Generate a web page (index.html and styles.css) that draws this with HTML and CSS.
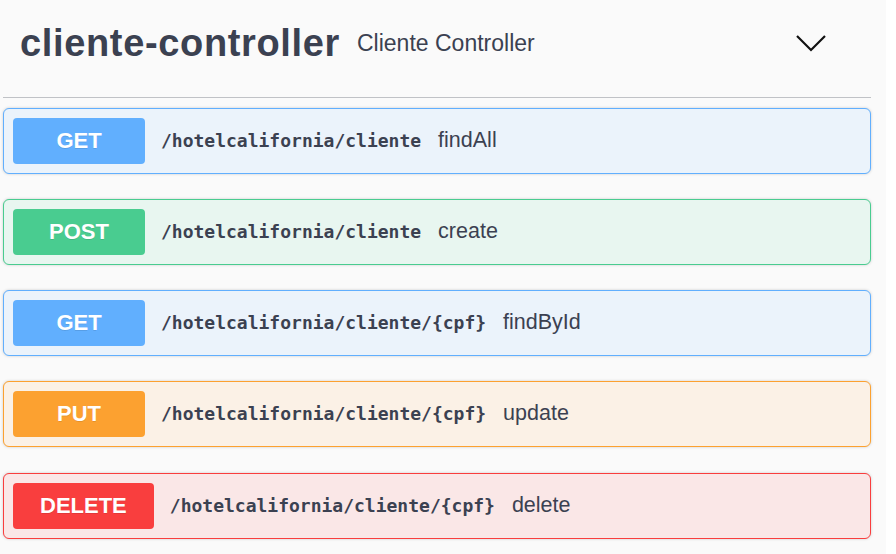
FILE: index.html
```html
<!DOCTYPE html>
<html lang="pt">
<head>
<meta charset="utf-8">
<title>cliente-controller</title>
<link rel="stylesheet" href="styles.css">
</head>
<body>
<div class="page">
  <div class="tag-section">
    <h4 class="opblock-tag">
      <a class="tag-name">cliente-controller</a>
      <small class="tag-desc">Cliente Controller</small>
      <button class="expand" aria-label="Collapse">
        <svg width="32" height="18" viewBox="0 0 32 18"><polyline points="2,2 16,16 30,2" fill="none" stroke="#111" stroke-width="2.2"/></svg>
      </button>
    </h4>
    <div class="ops">
      <div class="opblock get">
        <span class="method">GET</span>
        <span class="path">/hotelcalifornia/cliente</span>
        <span class="desc">findAll</span>
      </div>
      <div class="opblock post">
        <span class="method">POST</span>
        <span class="path">/hotelcalifornia/cliente</span>
        <span class="desc">create</span>
      </div>
      <div class="opblock get">
        <span class="method">GET</span>
        <span class="path">/hotelcalifornia/cliente/{cpf}</span>
        <span class="desc">findById</span>
      </div>
      <div class="opblock put">
        <span class="method">PUT</span>
        <span class="path">/hotelcalifornia/cliente/{cpf}</span>
        <span class="desc">update</span>
      </div>
      <div class="opblock delete">
        <span class="method">DELETE</span>
        <span class="path">/hotelcalifornia/cliente/{cpf}</span>
        <span class="desc">delete</span>
      </div>
    </div>
  </div>
</div>
</body>
</html>
```

FILE: styles.css
```css
html, body {
  margin: 0;
  padding: 0;
  background: #ffffff;
}
body {
  font-family: "Liberation Sans", Arial, sans-serif;
  color: #3b4151;
}
.page {
  width: 886px;
  height: 554px;
  background: #fafafa;
  overflow: hidden;
}
.tag-section {
  margin-left: 3px;
  width: 868px;
}
.opblock-tag {
  display: flex;
  align-items: center;
  margin: 0;
  padding: 21px 0 32px 17px;
  border-bottom: 1px solid rgba(59, 65, 81, 0.3);
  font-weight: normal;
}
.tag-name {
  font-size: 38px;
  line-height: 44px;
  letter-spacing: 0.65px;
  font-weight: bold;
  color: #3b4151;
}
.tag-desc {
  flex: 1;
  font-size: 23px;
  line-height: 28px;
  padding-left: 17px;
  color: #3b4151;
}
.expand {
  border: none;
  background: none;
  padding: 0;
  margin-right: 44px;
  width: 32px;
  height: 18px;
  display: flex;
}
.ops {
  padding-top: 10px;
}
.opblock {
  display: flex;
  align-items: center;
  height: 66px;
  box-sizing: border-box;
  padding: 0 9px;
  margin-bottom: 25px;
  border: 1px solid;
  border-radius: 6px;
  box-shadow: 0 0 3px rgba(0, 0, 0, 0.19);
}
.opblock:nth-child(4) {
  margin-bottom: 26px;
}
.method {
  box-sizing: border-box;
  min-width: 132px;
  height: 46px;
  line-height: 45px;
  padding: 0 27px;
  border-radius: 4px;
  text-align: center;
  color: #ffffff;
  font-size: 22px;
  font-weight: bold;
  text-shadow: 0 1px 0 rgba(0, 0, 0, 0.1);
}
.path {
  margin-left: 16px;
  margin-top: -2px;
  font-family: "DejaVu Sans Mono", "Liberation Mono", monospace;
  font-weight: bold;
  font-size: 18px;
  color: #3b4151;
}
.desc {
  margin-left: 17px;
  margin-top: -2px;
  font-size: 21.5px;
  color: #3b4151;
}
.get { background: #ebf3fb; border-color: #61affe; }
.get .method { background: #61affe; }
.post { background: #e8f6f0; border-color: #49cc90; }
.post .method { background: #49cc90; }
.put { background: #fbf1e6; border-color: #fca130; }
.put .method { background: #fca130; }
.delete { background: #fae7e7; border-color: #f93e3e; }
.delete .method { background: #f93e3e; }
```
